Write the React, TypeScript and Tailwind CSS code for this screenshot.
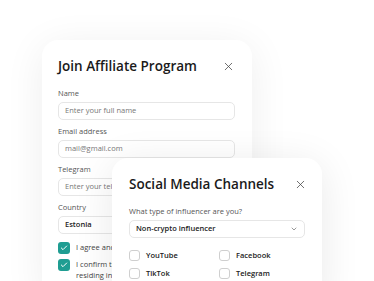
import { X, ChevronDown, Check } from 'lucide-react';

const Field = ({ label, placeholder, bold }: { label: string; placeholder: string; bold?: boolean }) => (
  <div className="flex flex-col">
    <span className="text-[7.5px] leading-[10px] text-[#555]">{label}</span>
    <div className="mt-[4px] h-[18px] rounded-[5px] border border-[#e6e6e6] bg-white px-[6px] flex items-center">
      <span className={bold ? 'text-[7.5px] font-semibold text-[#222]' : 'text-[7.5px] text-[#777]'}>{placeholder}</span>
    </div>
  </div>
);

const Tick = ({ checked, label }: { checked?: boolean; label: string }) => (
  <div className="flex items-center gap-[6px]">
    <div
      className={
        checked
          ? 'w-[12px] h-[12px] rounded-[3px] bg-[#1f9d92] flex items-center justify-center'
          : 'w-[11px] h-[11px] rounded-[3px] border border-[#cfcfcf] bg-white'
      }
    >
      {checked && <Check size={8} strokeWidth={3} color="#fff" />}
    </div>
    <span className={checked ? 'text-[7.5px] text-[#444]' : 'text-[7.5px] font-semibold text-[#222]'}>{label}</span>
  </div>
);

export default function App() {
  return (
    <div className="relative w-[374px] h-[281px] overflow-hidden bg-white" style={{ fontFamily: '"Open Sans", "Noto Sans", sans-serif' }}>
      {/* Join Affiliate Program */}
      <div className="absolute left-[42px] top-[40px] w-[210px] h-[260px] rounded-[16px] bg-white shadow-[0_6px_40px_rgba(0,0,0,0.07)] px-[16px] pt-[16px]">
        <div className="flex items-center justify-between h-[20px]">
          <h2 className="text-[13.5px] font-semibold text-[#1a1a1a]">Join Affiliate Program</h2>
          <X size={13} strokeWidth={1.4} color="#444" className="mr-[1px]" />
        </div>
        <div className="mt-[12px] flex flex-col gap-[6px] w-[177px]">
          <Field label="Name" placeholder="Enter your full name" />
          <Field label="Email address" placeholder="mail@gmail.com" />
          <Field label="Telegram" placeholder="Enter your telegram" />
          <Field label="Country" placeholder="Estonia" bold />
        </div>
        <div className="mt-[8px] flex flex-col gap-[5px]">
          <Tick checked label="I agree and accept the terms" />
          <div className="flex items-start gap-[6px]">
            <div className="w-[12px] h-[12px] rounded-[3px] bg-[#1f9d92] flex items-center justify-center shrink-0">
              <Check size={8} strokeWidth={3} color="#fff" />
            </div>
            <span className="text-[7.5px] leading-[11px] text-[#444]">I confirm that I am not<br />residing in</span>
          </div>
        </div>
      </div>

      {/* Social Media Channels */}
      <div className="absolute left-[112px] top-[158px] w-[210px] h-[150px] rounded-[16px] bg-white shadow-[0_6px_40px_rgba(0,0,0,0.09)] px-[17px] pt-[16px]">
        <div className="flex items-center justify-between h-[20px]">
          <h2 className="text-[13.5px] font-semibold text-[#1a1a1a]">Social Media Channels</h2>
          <X size={13} strokeWidth={1.4} color="#444" className="mr-[-2px]" />
        </div>
        <div className="mt-[12px] text-[7.5px] leading-[10px] text-[#555]">What type of influencer are you?</div>
        <div className="mt-[4px] h-[18px] w-[176px] rounded-[5px] border border-[#e6e6e6] px-[6px] flex items-center justify-between">
          <span className="text-[7.5px] font-semibold text-[#222]">Non-crypto influencer</span>
          <ChevronDown size={8} strokeWidth={2} color="#666" />
        </div>
        <div className="mt-[12px] grid grid-cols-[90px_1fr] gap-y-[7px]">
          <Tick label="YouTube" />
          <Tick label="Facebook" />
          <Tick label="TikTok" />
          <Tick label="Telegram" />
        </div>
      </div>
    </div>
  );
}
